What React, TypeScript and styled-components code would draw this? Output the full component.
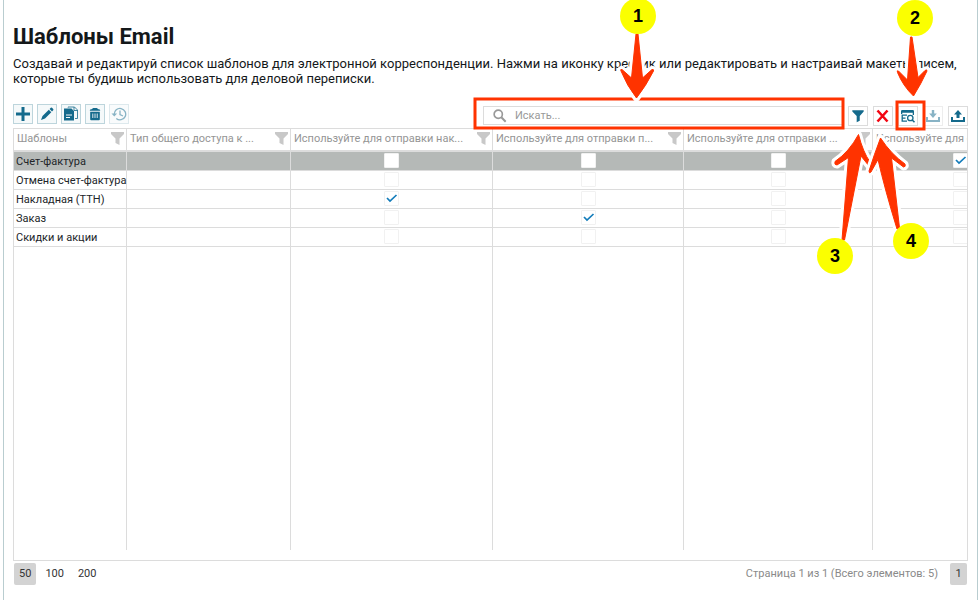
import React from "react";
import styled, { createGlobalStyle, css } from "styled-components";

const GlobalStyle = createGlobalStyle`
  *, *::before, *::after { box-sizing: border-box; }
  body {
    margin: 0;
    background: #fff;
    color: #212529;
    font-family: Roboto, "Liberation Sans", sans-serif;
    font-size: 11px;
  }
  button, input { font: inherit; color: inherit; }
`;

const Page = styled.main`
  position: relative;
  display: flex;
  flex-direction: column;
  min-height: 100vh;
  margin: 0 1px 0 3px;
  padding: 23px 9px 15px;
  border: solid #b9cdd0;
  border-width: 0 1px;
  overflow: hidden;
`;

const Title = styled.h1`
  margin: 0;
  font-size: 22px;
  line-height: 28px;
  font-weight: 700;
  color: #14181a;
`;

const Intro = styled.p`
  margin: 5px 0 0;
  font-size: 13px;
  line-height: 15px;
  color: #14181a;
`;

const Toolbar = styled.div`
  display: flex;
  align-items: flex-start;
  justify-content: space-between;
  height: 24px;
  margin-top: 18px;
`;

const Actions = styled.div`
  display: flex;
  gap: 4px;
`;

const Tools = styled.div`
  display: flex;
  flex: 0 1 485px;
  gap: 5px;
  padding-top: 2px;
`;

const IconButton = styled.button<{ $tinted?: boolean }>`
  display: flex;
  flex: none;
  align-items: center;
  justify-content: center;
  width: 20px;
  height: 20px;
  padding: 0;
  border: 1px solid ${(p) => (p.$tinted ? "#bdd5dc" : "#dcdcdc")};
  background: ${(p) => (p.$tinted ? "#f5f9fa" : "#fff")};
  color: #146a8c;
  &:disabled { opacity: 0.5; }
`;

const SearchBox = styled.label`
  display: flex;
  flex: 1;
  align-items: center;
  gap: 8px;
  min-width: 0;
  height: 19px;
  padding-left: 9px;
  border: 1px solid #dcdcdc;
  color: #999;
`;

const SearchInput = styled.input`
  flex: 1;
  min-width: 0;
  padding: 0;
  border: 0;
  outline: 0;
  background: transparent;
  &::placeholder { color: #999; opacity: 1; }
`;

const Grid = styled.div`
  display: grid;
  flex: 1;
  padding-bottom: 10px;
  border: 1px solid #dcdcdc;
  overflow: hidden;
`;

const Table = styled.table`
  width: 1034px;
  height: 100%;
  table-layout: fixed;
  border-collapse: separate;
  border-spacing: 0;
`;

const HeadCell = styled.th`
  height: 23px;
  padding: 0 2px 2px 3px;
  border-right: 1px solid #dcdcdc;
  border-bottom: 2px solid #dcdcdc;
  font-weight: 400;
  text-align: left;
  color: #959595;
`;

const HeadContent = styled.div`
  display: flex;
  align-items: center;
  justify-content: space-between;
`;

const HeadLabel = styled.span`
  min-width: 0;
  line-height: 16px;
  white-space: nowrap;
`;

const Row = styled.tr<{ $selected?: boolean }>`
  ${(p) => p.$selected && css`background: #b5b9b7;`}
`;

const Cell = styled.td`
  height: 19px;
  padding: 2px 0 0 2px;
  border-right: 1px solid #dcdcdc;
  border-bottom: 1px solid #dcdcdc;
  line-height: 16px;
  white-space: nowrap;
`;

const CheckCell = styled(Cell)`
  padding: 1px 0 0;
  line-height: 0;
  text-align: center;
  vertical-align: top;
`;

const FillCell = styled.td`
  padding: 0;
  border-right: 1px solid #dcdcdc;
`;

const Check = styled.input`
  appearance: none;
  width: 15px;
  height: 15px;
  margin: 0;
  border: 1px solid #f1f1f1;
  border-radius: 1px;
  background: #fff center / 13px 13px no-repeat;
  vertical-align: top;
  &:checked {
    background-image: url("data:image/svg+xml,%3Csvg xmlns='http://www.w3.org/2000/svg' viewBox='0 0 13 13'%3E%3Cpath d='M2 6l3 3 6.500-6' fill='none' stroke='%23137cba' stroke-width='1.700'/%3E%3C/svg%3E");
  }
`;

const Pager = styled.nav`
  display: flex;
  align-items: center;
  justify-content: space-between;
  padding: 2px 1px 0;
`;

const PagerGroup = styled.div`
  display: flex;
  align-items: center;
`;

const PageButton = styled.button<{ $active?: boolean }>`
  height: 22px;
  padding: 0 5px 2px;
  margin-right: 4px;
  border: 0;
  border-radius: 2px;
  background: ${(p) => (p.$active ? "#d3d3d3" : "transparent")};
  color: #333;
  &:last-child { margin-right: 0; }
`;

const CurrentPageButton = styled(PageButton)`
  width: 17px;
`;

const PageInfo = styled.span`
  margin-right: 12px;
  padding-bottom: 2px;
  color: #8a8a8a;
`;

const Notes = styled.div`
  position: absolute;
  top: 0;
  right: -2px;
  width: 519px;
  height: 300px;
  pointer-events: none;
`;

const Badge = styled.span<{ $x: number; $y: number }>`
  position: absolute;
  left: ${(p) => p.$x}px;
  top: ${(p) => p.$y}px;
  display: grid;
  place-items: center;
  width: 36px;
  height: 36px;
  border-radius: 50%;
  background: #fbff00;
  color: #000;
  font: 700 18px/20px "Liberation Sans", sans-serif;
`;

const IconFrame = ({ size = 16, children }: { size?: number; children: React.ReactNode }) => (
  <svg width={size} height={size} viewBox="0 0 16 16" fill="currentColor" aria-hidden="true">
    {children}
  </svg>
);

const icons = {
  add: <path d="M6.500 1h3v5.500H15v3H9.500V15h-3V9.500H1v-3h5.500z" />,
  edit: <path d="M2 14l1.500-4 6.300-6.300 2.500 2.500L6 12.500zM10.600 3l1.200-1.200q.6-.5 1.200 0l1.200 1.200q.5.600 0 1.200L13 5.400z" />,
  copy: (
    <>
      <path d="M1 2.500h7.500L11 5v9.500H1zM3 8.500v1h6v-1zm0 2.500v1h4v-1z" fillRule="evenodd" />
      <path d="M5 1.500V1h6.500L14.500 4v8.500H12M11 1v3.500h3.500" fill="none" stroke="currentColor" strokeWidth=".8" />
    </>
  ),
  trash: (
    <path
      fillRule="evenodd"
      d="M2 4.200q0-1.500 2-1.500l2-1.700h4l2 1.700q2 0 2 1.500zM2.500 5.500h11V14q0 1-1 1h-9q-1 0-1-1zM5 7.500v5h1v-5zm2.500 0v5h1v-5zm2.500 0v5h1v-5z"
    />
  ),
  history: (
    <g fill="none" stroke="currentColor" strokeWidth="1.300">
      <path d="M3.300 8.500a5.700 5.700 0 1 1 2 4M9 4.500v4l3 1.500" />
      <path d="M.5 7.500h5.600L3.300 10.500z" fill="currentColor" stroke="none" />
    </g>
  ),
  search: (
    <g fill="none" stroke="currentColor" strokeWidth="1.900">
      <circle cx="6" cy="6" r="4.700" />
      <path d="M9.500 9.500l5 5" strokeWidth="2.300" />
    </g>
  ),
  filter: <path d="M1.500 1.500h13v1.300L10 8v5.500L6.500 15V8l-5-5.200z" />,
  clear: <path d="M2.500 2.500l10 11M12.500 2.500l-10 11" stroke="#f30612" strokeWidth="2.600" />,
  inspect: (
    <>
      <path d="M1 6V3.200Q1 2 2.200 2h10.600Q14 2 14 3.200V7h-1.300V4.800H2.300V6z" />
      <path d="M7 7.200H2.200v6H7M2.200 10.200H5.500" fill="none" stroke="currentColor" strokeWidth="1.300" />
      <circle cx="10.300" cy="10" r="2.700" fill="none" stroke="currentColor" strokeWidth="1.300" />
      <path d="M12.200 12l2.300 2.300" stroke="currentColor" strokeWidth="1.600" />
    </>
  ),
  download: <path d="M1 9h2v3h10V9h2v5H1zM6.800 2h2.400v3.500h2.600L8 10 4.200 5.500h2.600z" />,
  upload: <path d="M1 9h2v3h10V9h2v5H1zM6.500 10h3V6.500h2.500L8 2 4 6.500h2.500z" />,
};

const FilterIcon = () => (
  <svg width="13" height="13" viewBox="0 0 13 13" fill="#c8c8c8" aria-hidden="true">
    <path d="M0 0h13v2L8.500 6.500V13l-4-2V6.500L0 2z" />
  </svg>
);

const columns = [
  { label: "Шаблоны", width: 113 },
  { label: "Тип общего доступа к ...", width: 164 },
  { label: "Используйте для отправки нак...", width: 202 },
  { label: "Используйте для отправки п...", width: 191 },
  { label: "Используйте для отправки ...", width: 189 },
  { label: "Используйте для отправки ...", width: 175 },
];

const rows = [
  { name: "Счет-фактура", checked: 3 },
  { name: "Отмена счет-фактура", checked: -1 },
  { name: "Накладная (ТТН)", checked: 0 },
  { name: "Заказ", checked: 1 },
  { name: "Скидки и акции", checked: -1 },
];

const arrows = [
  "M176 34L171.500 78L162 69.500Q160 69 161 71Q167 86 176.500 98Q186 86 193.500 71Q194 69 192 69.500L182.500 78L178 34Z",
  "M450.500 37L447.500 80L438.500 71Q436.500 70 437.500 72.500Q443 86 453.500 96Q461 84 467 71Q467 69 465 70.500L458 77.500L452 37Z",
  "M382 240L388.500 157.500L377 165Q374 165 375 161.500Q389 152 398.500 134.500Q403 152 410 162Q411 166 409 166L401 156L384.500 240Z",
  "M437 229Q425 190 418 159.500L411 172Q409 174 409 171Q414 155 420.500 138Q431 154 445 164Q446 167 443.500 167L431.500 158L439.500 228Z",
];

export default function App() {
  return (
    <>
      <GlobalStyle />
      <Page>
        <Title>Шаблоны Email</Title>
        <Intro>
          Создавай и редактируй список шаблонов для электронной корреспонденции. Нажми на иконку крестик или
          редактировать и настраивай макеты писем, которые ты будишь использовать для деловой переписки.
        </Intro>
        <Toolbar>
          <Actions>
            <IconButton $tinted aria-label="Добавить"><IconFrame>{icons.add}</IconFrame></IconButton>
            <IconButton $tinted aria-label="Редактировать"><IconFrame>{icons.edit}</IconFrame></IconButton>
            <IconButton $tinted aria-label="Копировать"><IconFrame>{icons.copy}</IconFrame></IconButton>
            <IconButton $tinted aria-label="Удалить"><IconFrame size={14}>{icons.trash}</IconFrame></IconButton>
            <IconButton $tinted disabled aria-label="История"><IconFrame>{icons.history}</IconFrame></IconButton>
          </Actions>
          <Tools>
            <SearchBox>
              <IconFrame size={14}>{icons.search}</IconFrame>
              <SearchInput type="text" placeholder="Искать..." aria-label="Искать" />
            </SearchBox>
            <IconButton aria-label="Фильтр"><IconFrame size={14}>{icons.filter}</IconFrame></IconButton>
            <IconButton aria-label="Очистить"><IconFrame>{icons.clear}</IconFrame></IconButton>
            <IconButton aria-label="Просмотр"><IconFrame>{icons.inspect}</IconFrame></IconButton>
            <IconButton disabled aria-label="Загрузить"><IconFrame>{icons.download}</IconFrame></IconButton>
            <IconButton aria-label="Выгрузить"><IconFrame>{icons.upload}</IconFrame></IconButton>
          </Tools>
        </Toolbar>
        <Grid>
          <Table>
            <colgroup>
              {columns.map((c, i) => <col key={i} width={c.width} />)}
            </colgroup>
            <thead>
              <tr>
                {columns.map((c, i) => (
                  <HeadCell key={i} scope="col">
                    <HeadContent>
                      <HeadLabel>{c.label}</HeadLabel>
                      <FilterIcon />
                    </HeadContent>
                  </HeadCell>
                ))}
              </tr>
            </thead>
            <tbody>
              {rows.map((row, r) => (
                <Row key={row.name} $selected={r === 0}>
                  <Cell>{row.name}</Cell>
                  <Cell />
                  {[0, 1, 2, 3].map((c) => (
                    <CheckCell key={c}>
                      <Check
                        type="checkbox"
                        defaultChecked={row.checked === c}
                        aria-label={`${row.name}: ${columns[c + 2].label}`}
                      />
                    </CheckCell>
                  ))}
                </Row>
              ))}
              <tr>
                {columns.map((_, i) => <FillCell key={i} />)}
              </tr>
            </tbody>
          </Table>
        </Grid>
        <Pager aria-label="Страницы">
          <PagerGroup>
            <PageButton $active>50</PageButton>
            <PageButton>100</PageButton>
            <PageButton>200</PageButton>
          </PagerGroup>
          <PagerGroup>
            <PageInfo>Страница 1 из 1 (Всего элементов: 5)</PageInfo>
            <CurrentPageButton $active>1</CurrentPageButton>
          </PagerGroup>
        </Pager>
        <Notes>
          <svg width="519" height="300" viewBox="0 0 519 300" aria-hidden="true">
            <g fill="none" stroke="#ff3300" strokeWidth="3">
              <rect x="15" y="99" width="368" height="29" />
              <rect x="437" y="102" width="27" height="27" />
            </g>
            {arrows.map((d) => (
              <g key={d} strokeLinejoin="round">
                <path d={d} fill="#fff" stroke="#fff" strokeWidth="7" />
                <path d={d} fill="#ff3300" stroke="#ff3300" strokeWidth="1" />
              </g>
            ))}
          </svg>
          <Badge $x={160} $y={-2}>1</Badge>
          <Badge $x={437} $y={0}>2</Badge>
          <Badge $x={357} $y={238}>3</Badge>
          <Badge $x={433} $y={223}>4</Badge>
        </Notes>
      </Page>
    </>
  );
}
